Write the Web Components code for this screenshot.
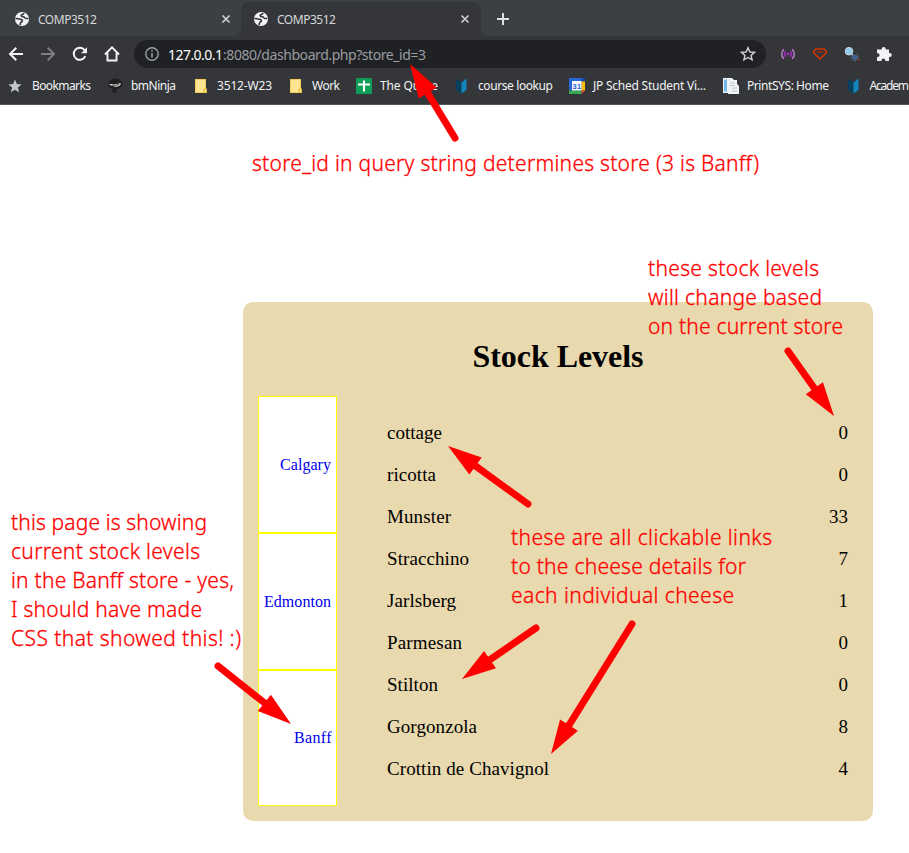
<!DOCTYPE html>
<html lang="en"><head><meta charset="utf-8"><title>COMP3512</title>
<style>
html,body{margin:0;background:#fff}
body{width:909px;height:853px;overflow:hidden;font-family:"Liberation Serif",serif}
</style></head><body>
<app-view></app-view>
<script>
const define=(name,html,after)=>customElements.define(name,class extends HTMLElement{
  connectedCallback(){
    if(this.shadowRoot)return;
    const t=document.createElement('template');t.innerHTML=typeof html==='function'?html(this):html;
    this.attachShadow({mode:'open'}).append(t.content.cloneNode(true));
    if(after)after(this);
  }});

/* One line of text tracked out to a given width */
define('fit-text',el=>`<style>:host{display:block;white-space:pre}span{display:inline-block}</style><span>${el.textContent}</span>`,el=>{
  const s=el.shadowRoot.querySelector('span'),n=s.textContent.length;
  const w=s.getBoundingClientRect().width;
  if(w&&n>1)s.style.letterSpacing=((+el.getAttribute('w')-w)/(n-1))+'px';
  if(n>1)s.style.marginRight='-4px';
});

const icons={
globe:['0 0 16 16','<circle cx="8" cy="8" r="7" fill="#f1f3f4"/><path d="M1.5 7.800c2-.6 3.300.2 4.800.4 1.600.2 2.400.8 2.100 1.900-.4 1.100-1.900.8-2 2.100 0 .7-.2 1.200-.2 1.700M9.800 2c.1 1.200-1 1.500-2.100 1.700-1.200.4-.5 1.400.2 1.800 1.200.5 2.200.1 2.700 1 .6 1.200 2 1.300 3.700.9" fill="none" stroke="#35363a" stroke-width="1.500"/>'],
close:['0 0 10 10','<path d="M1.500 1.500 8.500 8.500M8.500 1.500 1.500 8.500" stroke="#d0d2d5" stroke-width="1.600"/>'],
plus:['0 0 14 14','<path d="M7 1v12M1 7h12" stroke="#dfe1e5" stroke-width="2"/>'],
back:['0 0 16 16','<path d="M15 8H2.500M8.300 1.800 2 8l6.300 6.200" fill="none" stroke="#f1f3f4" stroke-width="2"/>'],
fwd:['0 0 16 16','<path d="M1 8h12.500M7.700 1.800 14 8l-6.300 6.200" fill="none" stroke="#7d7f83" stroke-width="2"/>'],
reload:['0 0 16 16','<path d="M13.300 10.200A6 6 0 1 1 12.600 4.200" fill="none" stroke="#f1f3f4" stroke-width="2"/><path d="M15 1.300v6H9z" fill="#f1f3f4"/>'],
home:['0 0 17 17','<path d="M1 9 8.500 1.500 16 9M3.700 7.500v7.900h9.600V7.500" fill="none" stroke="#f1f3f4" stroke-width="2"/>'],
info:['0 0 14 14','<circle cx="7" cy="7" r="6.200" fill="none" stroke="#9aa0a6" stroke-width="1.400"/><path d="M7 6v4.500M7 3.300v1.500" stroke="#9aa0a6" stroke-width="1.500"/>'],
star:['0 0 16 16','<path d="M8 1.700 9.900 6l4.600.4-3.500 3 1.100 4.500L8 11.500l-4.100 2.400L5 9.400l-3.500-3L6.100 6z" fill="none" stroke="#d0d2d5" stroke-width="1.400"/>'],
starf:['0 0 14 14','<path d="M7 .5 8.800 5l4.800.4-3.700 3.100 1.200 4.700L7 10.700l-4.100 2.500 1.200-4.700L.4 5.400 5.200 5z" fill="#c3c6ca"/>'],
cast:['0 0 16 12','<g fill="none" stroke-width="1.500"><path d="M3.700 1.200Q-.2 6 3.700 10.800M12.300 1.200Q16.200 6 12.300 10.800" stroke="#bd78d2"/><path d="M5.700 3Q3.600 6 5.700 9M10.300 3Q12.400 6 10.300 9" stroke="#9a2cb8"/></g><circle cx="8" cy="6" r="1.300" fill="#a535c1"/>'],
gem:['0 0 16 12','<path d="M3.500 1h9l2.200 3.300L8 11 1.300 4.300z" fill="none" stroke="#d23400" stroke-width="1.500"/><path d="M5 4h6" stroke="#a52c0c" stroke-width="1.500"/>'],
inspect:['0 0 16 16','<circle cx="5" cy="5.200" r="3.800" fill="#8fcbed" stroke="#c7d8df"/><path d="m7.500 8 2 2" stroke="#b8bec4" stroke-width="1.600"/><ellipse cx="11" cy="11.500" rx="3.200" ry="2.600" transform="rotate(25 11 11.500)" fill="#46618f"/><path d="m8 11-1.500 1M9 13.500l-1.500 1.500M12 9l1-1.500M13.500 10.500l1.500-.5M11 14v1.500" stroke="#5b6f92"/><path d="m13.500 12.500 2 2" stroke="#8c4a31" stroke-width="1.500"/>'],
puzzle:['0 0 16 16','<path d="M2 3.500h3.700V3a2 2 0 0 1 4 0v.5h3.300v3.400h.7a2.100 2.100 0 0 1 0 4.200H13V15H9.300v-.7a1.900 1.900 0 0 0-3.800 0v.7H1v-4h.7a1.900 1.900 0 0 0 0-3.800H1V3.500z" fill="#f1f3f4"/>'],
ninja:['0 0 16 16','<path d="M1 5Q3 .5 8 .5q6 0 7.500 4.500-.5 5-5.500 6.200L8.500 15.500 7 13.500 4.500 15 6 11.200Q1 9.500 1 5" fill="#202020"/><path d="M1.500 5.800q6 1.200 12.500-.8-1 4-5.500 3.700Q4 8.200 1.500 5.800" fill="#d8d8d8"/><path d="M5 7.200q4 .5 7-.8" fill="none" stroke="#55504c"/>'],
folder:['0 0 12 14','<path d="M0 0h10.700v9l1.300 1v4H0z" fill="#ffe58f"/><path d="M.5.5v13H9V10h1.500V.5z" fill="none" stroke="#f0cd58"/><path d="M9 10h2.500v3.500H9z" fill="#ffe58f" stroke="#e7be39"/>'],
sheet:['0 0 16 16','<rect width="16" height="16" rx="1" fill="#109d59"/><path d="M7 2.500h2v3h5v2H9v6H7v-6H2v-2h5z" fill="#fff"/>'],
book:['0 0 12 16','<path d="m1 .5 5.500 4v11.200L1 12z" fill="#074061"/><path d="M11.500.5l-5 4v11.200l5-3.700z" fill="#1683bd"/>'],
cal:['0 0 16 16','<path d="M0 0h12.500v12.500H0z" fill="#2769d7"/><path d="M12.500 0H15l1 1v2.500h-3.500z" fill="#174eaf"/><path d="M12.500 3.500H16v9h-3.500z" fill="#fbbc04"/><path d="M0 12.500h12.500V16H0z" fill="#34a853"/><path d="M12.500 12.500H16L12.500 16z" fill="#ea4335"/><path d="M3 3h9.500v9.500H3z" fill="#fff"/><text x="7.800" y="10.800" text-anchor="middle" font-family="Liberation Sans" font-weight="700" font-size="8" fill="#2769d7">31</text>'],
print:['0 0 16 16','<path d="M0 0h9l2 2v13H0z" fill="#eef5f8"/><path d="M1 1.500h3v12H1z" fill="#74b8e6"/><path d="M5 2h9v4l2 2v8H5z" fill="#f1f3f4"/><path d="M7 5h5M7 7.500h5M9 10h5m-5 3h5" stroke="#b9c2c9"/>']};
define('app-icon',el=>{const [vb,body]=icons[el.getAttribute('name')];const w=el.getAttribute('w')||vb.split(' ')[2];return `<style>:host{display:block;flex:none;width:${w}px}svg{display:block;width:100%}</style><svg viewBox="${vb}">${body}</svg>`});

define('browser-tab',`<style>:host{display:flex;align-items:center;box-sizing:border-box;width:240px;height:34px;padding:0 11px 0 13px;color:#d5d7da}
:host([active]){background:#35363a;border-radius:8px 8px 0 0}
slot{display:block;flex:1;margin-left:8px}app-icon{flex:none}</style><app-icon name="globe" w="16"></app-icon><slot></slot><app-icon name="close"></app-icon>`);

define('tab-strip',`<style>:host{display:flex;align-items:flex-end;box-sizing:border-box;height:36px;background:#3c4043;font-size:12px}
.idle{background:#3c4043;border-bottom-right-radius:8px}.wrap{background:#35363a;height:36px;display:flex;align-items:flex-end}.rest{flex:1;height:36px;background:#3c4043;border-bottom-left-radius:8px}.restw{flex:1;background:#35363a;display:flex}
</style><div class="wrap"><browser-tab class="idle" style="height:36px;width:241px;padding:2px 10px 0 14px"><fit-text w="59">COMP3512</fit-text></browser-tab></div><div style="background:#3c4043"><browser-tab active style="padding-left:12px"><fit-text w="59">COMP3512</fit-text></browser-tab></div><div class="restw"><div class="rest"><app-icon name="plus" style="margin:12px 0 0 15px"></app-icon></div></div>`);

define('tool-bar',`<style>:host{display:flex;align-items:center;height:36px;background:#35363a;padding-left:8px;font-size:14px}
.omni{display:flex;align-items:center;box-sizing:border-box;width:632px;height:28px;border-radius:14px;background:#202124;color:#999ca1;margin-left:14px;padding:0 10px 0 11px}
.url{display:flex;flex:1;margin-left:9px}.url fit-text:first-child{color:#fff;width:55px}
.nav{display:flex;gap:16px}.ext{display:flex;align-items:center;gap:16px;margin-left:14px}</style>
<div class="nav"><app-icon name="back"></app-icon><app-icon name="fwd"></app-icon><app-icon name="reload"></app-icon><app-icon name="home" w="16"></app-icon></div>
<div class="omni"><app-icon name="info"></app-icon><div class="url"><fit-text w="55">127.0.0.1</fit-text><fit-text w="203">:8080/dashboard.php?store_id=3</fit-text></div><app-icon name="star"></app-icon></div>
<div class="ext"><app-icon name="cast"></app-icon><app-icon name="gem"></app-icon><app-icon name="inspect"></app-icon><app-icon name="puzzle"></app-icon></div>`);

define('book-mark',el=>`<style>:host{display:flex;align-items:center}.i{box-sizing:border-box;width:24px;flex:none;padding-left:${{folder:2,book:1}[el.getAttribute('icon')]||0}px}</style><div class="i"><app-icon name="${el.getAttribute('icon')}"></app-icon></div><slot></slot>`);
define('bookmark-bar',`<style>:host{display:grid;grid-template-columns:99px 86px 95px 68px 98px 115px 154px 123px 63px;box-sizing:border-box;height:33px;padding:0 0 5px 8px;background:#35363a;border-bottom:1px solid #55565a;color:#f1f3f4;font-size:12px;overflow:hidden}</style>
<book-mark icon="starf"><fit-text w="59">Bookmarks</fit-text></book-mark>
<book-mark icon="ninja"><fit-text w="45">bmNinja</fit-text></book-mark>
<book-mark icon="folder"><fit-text w="55">3512-W23</fit-text></book-mark>
<book-mark icon="folder"><fit-text w="28">Work</fit-text></book-mark>
<book-mark icon="sheet"><fit-text w="58">The Quote</fit-text></book-mark>
<book-mark icon="book"><fit-text w="75">course lookup</fit-text></book-mark>
<book-mark icon="cal"><fit-text w="113">JP Sched Student Vi...</fit-text></book-mark>
<book-mark icon="print"><fit-text w="82">PrintSYS: Home</fit-text></book-mark>
<book-mark icon="book"><fit-text w="39.500" style="margin-left:-.5px">Academ</fit-text></book-mark>`);

define('browser-chrome',`<style>:host{display:flex;flex-direction:column;height:105px;font-family:"Noto Sans",sans-serif}</style><tab-strip></tab-strip><tool-bar></tool-bar><bookmark-bar></bookmark-bar>`);

define('store-link',`<style>:host{display:flex;align-items:center;justify-content:flex-end;box-sizing:border-box;border:1.500px solid #ff0;background:#fff;color:#0000ee;font-size:16px;padding-right:6px}</style><slot></slot>`);
define('stock-row',el=>`<style>:host{display:flex;justify-content:space-between;align-items:center;height:42px;font-size:19px;color:#000}</style><slot></slot><span>${el.getAttribute('q')}</span>`);
const rows=[['cottage',55,0],['ricotta',49,0],['Munster',64,33],['Stracchino',82,7],['Jarlsberg',69,1],['Parmesan',75,0],['Stilton',51,0],['Gorgonzola',90,8],['Crottin de Chavignol',162,4]];
define('stock-card',`<style>:host{display:block;box-sizing:border-box;width:630px;height:519px;margin:197px 0 0 243px;padding:38px 25px 0 15px;border-radius:10px;background:#e9d9ae}
h1{display:flex;justify-content:center;margin:0 -10px 0 0;height:34px;line-height:32px;font-size:32px;font-weight:bold}h1 fit-text{width:171px}
.body{display:flex;gap:50px;margin-top:22px}nav{display:grid;width:79px;height:410px;grid-template-rows:137px 137px 136px}
.rows{flex:1;padding-top:16px}</style><h1><fit-text w="171">Stock Levels</fit-text></h1>
<div class="body"><nav><store-link><fit-text w="51" style="width:50px">Calgary</fit-text></store-link><store-link><fit-text w="67" style="width:66px">Edmonton</fit-text></store-link><store-link style="padding-right:5px"><fit-text w="37.500" style="width:37px">Banff</fit-text></store-link></nav>
<div class="rows">${rows.map(([n,w,q])=>`<stock-row q="${q}"><fit-text w="${w}">${n}</fit-text></stock-row>`).join('')}</div></div>`);

/* Callout text and arrows float over the page */
define('call-out',`<style>:host{position:absolute;display:block;color:#f00;font:300 21px/29px "Noto Sans",sans-serif;-webkit-text-stroke:.3px #f00;white-space:nowrap}</style><slot></slot>`);
const arrows=[[455,138,410,64],[788,351,834,416],[528,504,448,446],[536,628,462,679],[632,624,551,754],[218,666,291,724]];
define('arrow-layer',`<style>:host{position:absolute;inset:0;pointer-events:none}svg{display:block}</style><svg width="909" height="853">${arrows.map(([x,y,a,b])=>{const l=Math.hypot(a-x,b-y),r=Math.atan2(b-y,a-x)*180/Math.PI;return `<g transform="translate(${a} ${b}) rotate(${r})"><path d="M${-l} 0H-30" stroke="#f00" stroke-width="7" stroke-linecap="round"/><path d="M0 0L-34 -10.500V10.500z" fill="#f00"/></g>`}).join('')}</svg>`);
const ft=a=>a.map(([t,w])=>`<fit-text w="${w}">${t}</fit-text>`).join('');
define('app-view',`<style>:host{display:block;position:relative;width:909px;height:853px;overflow:hidden;background:#fff}</style>
<browser-chrome></browser-chrome><stock-card></stock-card>
<call-out style="left:252px;top:149px">${ft([['store_id in query string determines store (3 is Banff)',507]])}</call-out>
<call-out style="left:648px;top:254px">${ft([['these stock levels',171],['will change based',174],['on the current store',195]])}</call-out>
<call-out style="left:511px;top:523px">${ft([['these are all clickable links',261],['to the cheese details for',235],['each individual cheese',223]])}</call-out>
<call-out style="left:11px;top:508px">${ft([['this page is showing',196],['current stock levels',189],['in the Banff store - yes,',223],['I should have made',191],['CSS that showed this! :)',230]])}</call-out>
<arrow-layer></arrow-layer>`);
</script></body></html>
